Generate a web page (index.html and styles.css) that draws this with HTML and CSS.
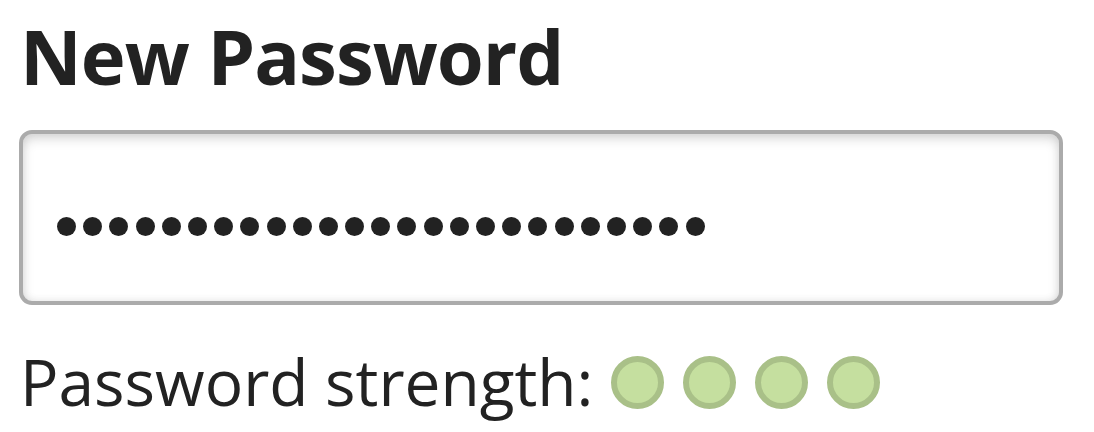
FILE: index.html
```html
<!DOCTYPE html>
<html lang="en">
<head>
<meta charset="utf-8">
<title>New Password</title>
<link rel="stylesheet" href="styles.css">
</head>
<body>
<main class="form">
  <label class="label" for="pw">New Password</label>
  <div class="input" id="pw" role="textbox" aria-label="New Password">
    <div class="dots">
      <span class="dot"></span><span class="dot"></span><span class="dot"></span><span class="dot"></span><span class="dot"></span>
      <span class="dot"></span><span class="dot"></span><span class="dot"></span><span class="dot"></span><span class="dot"></span>
      <span class="dot"></span><span class="dot"></span><span class="dot"></span><span class="dot"></span><span class="dot"></span>
      <span class="dot"></span><span class="dot"></span><span class="dot"></span><span class="dot"></span><span class="dot"></span>
      <span class="dot"></span><span class="dot"></span><span class="dot"></span><span class="dot"></span><span class="dot"></span>
    </div>
  </div>
  <div class="strength">
    <span class="strength-text">Password strength:</span>
    <span class="meter">
      <span class="pip"></span><span class="pip"></span><span class="pip"></span><span class="pip"></span>
    </span>
  </div>
</main>
</body>
</html>
```
FILE: styles.css
```css
html, body {
  margin: 0;
  padding: 0;
  background: #ffffff;
}
body {
  font-family: "Open Sans", "Noto Sans", sans-serif;
  color: #222222;
}
.form {
  display: flex;
  flex-direction: column;
  align-items: flex-start;
  padding: 0 31px 0 19px;
}
.label {
  font-weight: 700;
  font-size: 76px;
  line-height: 100px;
  margin-top: 6px;
  margin-left: 1px;
  letter-spacing: -1px;
}
.input {
  box-sizing: border-box;
  align-self: stretch;
  height: 175px;
  margin-top: 24px;
  border: 4px solid #ababab;
  border-radius: 13px;
  background: #ffffff;
  box-shadow: inset 0 5px 12px rgba(0, 0, 0, 0.14), inset 0 0 8px rgba(0, 0, 0, 0.08);
  display: flex;
  align-items: center;
  padding: 17px 0 0 34px;
}
.dots {
  display: flex;
  gap: 7.2px;
}
.dot {
  width: 19px;
  height: 19px;
  border-radius: 50%;
  background: #222222;
}
.strength {
  display: flex;
  align-items: center;
  margin-top: 32px;
}
.strength-text {
  font-size: 64px;
  line-height: 90px;
  margin-left: 1px;
}
.meter {
  display: flex;
  gap: 19px;
  margin-left: 18px;
}
.pip {
  box-sizing: border-box;
  width: 53px;
  height: 53px;
  border-radius: 50%;
  border: 6px solid #a9c088;
  background: #c5df9f;
}
```
